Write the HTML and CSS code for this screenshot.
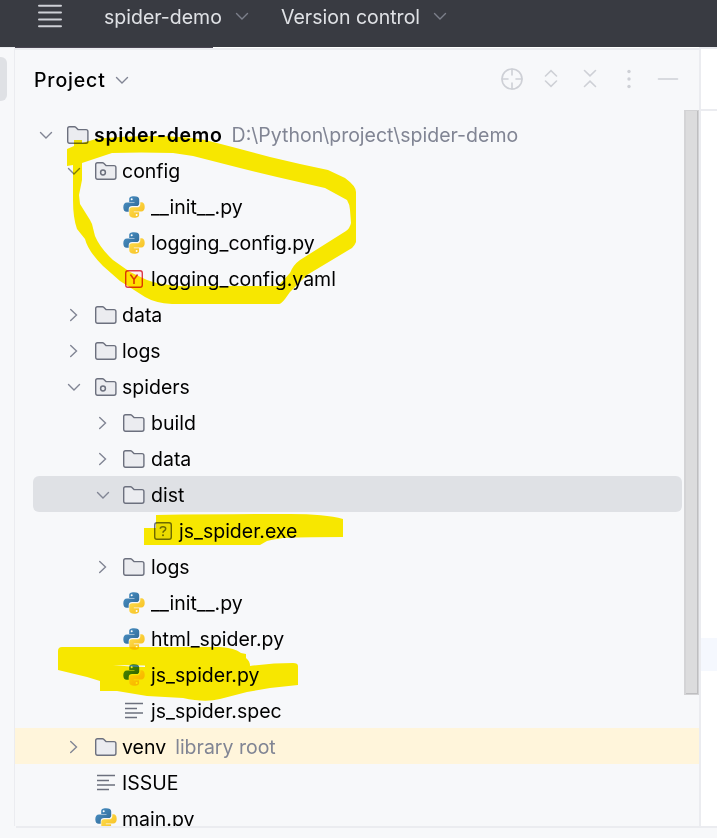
FILE: index.html
```html
<!DOCTYPE html>
<html lang="en">
<head>
    <meta charset="UTF-8">
    <title>spider-demo</title>
    <link rel="stylesheet" href="styles.css">
</head>
<body>
    <svg class="defs" width="0" height="0">
        <defs>
            <linearGradient id="blue" x1="0" y1="0" x2="1" y2="1">
                <stop offset="0" stop-color="#4f97cb"/>
                <stop offset="1" stop-color="#2b628f"/>
            </linearGradient>
            <linearGradient id="gold" x1="0" y1="0" x2="1" y2="1">
                <stop offset="0" stop-color="#ffe052"/>
                <stop offset="1" stop-color="#f5bb1c"/>
            </linearGradient>
            <symbol id="down" viewBox="0 0 24 24"><path d="M6.5 9.5L12 15L17.5 9.5" fill="none" stroke="currentColor" stroke-width="1.4" stroke-linecap="round"/></symbol>
            <symbol id="right" viewBox="0 0 24 24"><path d="M8.7 6.5L14.5 12L8.7 17.5" fill="none" stroke="currentColor" stroke-width="1.4" stroke-linecap="round"/></symbol>
            <symbol id="folder" viewBox="0 0 24 24"><path d="M1.7 5.5Q1.7 3.7 3.5 3.7H8.5Q9.2 3.7 9.7 4.2L12 6.6H20Q21.9 6.6 21.9 8.5V18.3Q21.9 20.2 20 20.2H3.6Q1.7 20.2 1.7 18.3Z" fill="#ebecf0" stroke="#6c707e" stroke-width="1.4"/></symbol>
            <symbol id="package" viewBox="0 0 24 24"><use href="#folder"/><circle cx="9" cy="13.5" r="2.4" fill="none" stroke="#6c707e" stroke-width="1.5"/></symbol>
            <symbol id="python" viewBox="0 0 24 24">
                <path d="M12 1.3C8.3 1.3 7.2 2.5 7.2 4.4V6.9H12.5V7.6H5C2.7 7.6 1.3 9.3 1.3 12.2C1.3 15.3 2.7 16.8 4.6 16.8H6.7V14.2C6.7 12.2 8.1 11 10 11H14.6C16.2 11 17.2 9.9 17.2 8.4V4.4C17.2 2.4 15.5 1.3 12 1.3Z" fill="url(#blue)"/>
                <path d="M12.2 22.7C15.9 22.7 17.1 21.5 17.1 19.7V17.2H11.8V16.4H19.2C21.5 16.4 22.7 14.8 22.7 11.9C22.7 8.8 21.4 7.3 19.5 7.3H18.3V9.2C18.3 11.2 17 12.3 15 12.3H10.2C8.4 12.3 7.3 13.3 7.3 15.1V19.6C7.3 21.6 8.9 22.7 12.2 22.7Z" fill="url(#gold)"/>
                <circle cx="9.7" cy="4.2" r="1" fill="#fff"/><circle cx="14.6" cy="19.9" r="1" fill="#fff"/>
            </symbol>
            <symbol id="yaml" viewBox="0 0 24 24"><rect x="3.7" y="3.7" width="16.6" height="16.6" rx="2.2" fill="#fff0ef" stroke="#db3b4b" stroke-width="1.4"/><path d="M8.4 7.5L12 12.5L15.6 7.5M12 12.5V17" fill="none" stroke="#db3b4b" stroke-width="1.6"/></symbol>
            <symbol id="unknown" viewBox="0 0 24 24"><rect x="3.7" y="3.7" width="16.6" height="16.6" rx="2.2" fill="#ebecf0" stroke="#6c707e" stroke-width="1.4"/><path d="M9.3 9.8Q9.3 7.7 12 7.7Q14.7 7.7 14.7 9.8Q14.7 11 13.2 11.8Q12 12.5 12 13.8" fill="none" stroke="#6c707e" stroke-width="1.5"/><circle cx="12" cy="16.3" r="1" fill="#6c707e"/></symbol>
            <symbol id="text" viewBox="0 0 24 24"><path d="M3 4.500H21M3 9.500H15M3 14H21M3 18.500H15" fill="none" stroke="#6c707e" stroke-width="1.400"/></symbol>
        </defs>
    </svg>
    <div class="topbar">
        <svg class="burger" width="26" height="26"><path d="M2 2.700H24M2 9.500H24M2 16.500H24M2 23.300H24" stroke="#ced0d6" stroke-width="2" stroke-linecap="round"/></svg>
        <span class="project-name">spider-demo</span>
        <svg class="icon"><use href="#down"/></svg>
        <span class="vcs">Version control</span>
        <svg class="icon"><use href="#down"/></svg>
    </div>
    <div class="main">
        <div class="strip"><div class="strip-tab"></div></div>
        <div class="panel">
            <div class="panel-head">
                <span class="panel-title">Project</span>
                <svg class="icon"><use href="#down"/></svg>
                <div class="tools">
                    <svg width="24" height="24" viewBox="0 0 24 24"><circle cx="12" cy="12" r="10"/><path d="M12 2V8M12 16V22M2 12H8M16 12H22"/></svg>
                    <svg width="24" height="24" viewBox="0 0 24 24"><path d="M6.5 9L12 3.7L17.5 9M6.5 14L12 19.3L17.5 14"/></svg>
                    <svg width="24" height="24" viewBox="0 0 24 24"><path d="M6.5 3.5L12 8.8L17.5 3.5M6.5 19.5L12 14.2L17.5 19.5"/></svg>
                    <svg class="dots" width="24" height="24" viewBox="0 0 24 24"><circle cx="12" cy="4.5" r="1.7"/><circle cx="12" cy="12" r="1.7"/><circle cx="12" cy="19.5" r="1.7"/></svg>
                    <svg width="24" height="24" viewBox="0 0 24 24"><path d="M2.5 12H21.5"/></svg>
                </div>
            </div>
            <div class="tree">
                <ul>
                    <li class="l0"><svg class="icon"><use href="#down"/></svg><svg class="type"><use href="#folder"/></svg><b>spider-demo</b><span class="hint">D:\Python\project\spider-demo</span></li>
                    <li class="l1"><svg class="icon"><use href="#down"/></svg><svg class="type"><use href="#package"/></svg><span>config</span></li>
                    <li class="l2"><i class="icon"></i><svg class="type"><use href="#python"/></svg><span>__init__.py</span></li>
                    <li class="l2"><i class="icon"></i><svg class="type"><use href="#python"/></svg><span>logging_config.py</span></li>
                    <li class="l2"><i class="icon"></i><svg class="type"><use href="#yaml"/></svg><span>logging_config.yaml</span></li>
                    <li class="l1"><svg class="icon"><use href="#right"/></svg><svg class="type"><use href="#folder"/></svg><span>data</span></li>
                    <li class="l1"><svg class="icon"><use href="#right"/></svg><svg class="type"><use href="#folder"/></svg><span>logs</span></li>
                    <li class="l1"><svg class="icon"><use href="#down"/></svg><svg class="type"><use href="#package"/></svg><span>spiders</span></li>
                    <li class="l2"><svg class="icon"><use href="#right"/></svg><svg class="type"><use href="#folder"/></svg><span>build</span></li>
                    <li class="l2"><svg class="icon"><use href="#right"/></svg><svg class="type"><use href="#folder"/></svg><span>data</span></li>
                    <li class="l2 selected"><svg class="icon"><use href="#down"/></svg><svg class="type"><use href="#folder"/></svg><span>dist</span></li>
                    <li class="l3"><i class="icon"></i><svg class="type"><use href="#unknown"/></svg><span>js_spider.exe</span></li>
                    <li class="l2"><svg class="icon"><use href="#right"/></svg><svg class="type"><use href="#folder"/></svg><span>logs</span></li>
                    <li class="l2"><i class="icon"></i><svg class="type"><use href="#python"/></svg><span>__init__.py</span></li>
                    <li class="l2"><i class="icon"></i><svg class="type"><use href="#python"/></svg><span>html_spider.py</span></li>
                    <li class="l2"><i class="icon"></i><svg class="type"><use href="#python"/></svg><span>js_spider.py</span></li>
                    <li class="l2"><i class="icon"></i><svg class="type"><use href="#text"/></svg><span>js_spider.spec</span></li>
                    <li class="l1 library"><svg class="icon"><use href="#right"/></svg><svg class="type"><use href="#folder"/></svg><span>venv</span><span class="hint">library root</span></li>
                    <li class="l1"><i class="icon"></i><svg class="type"><use href="#text"/></svg><span>ISSUE</span></li>
                    <li class="l1"><i class="icon"></i><svg class="type"><use href="#python"/></svg><span>main.py</span></li>
                </ul>
                <div class="scrollbar"></div>
            </div>
        </div>
        <div class="editor">
            <div class="editor-tabs"></div>
            <div class="editor-line"></div>
        </div>
    </div>
    <div class="statusbar"></div>
    <!-- highlighter marks -->
    <svg class="marker" width="717" height="838" viewBox="0 0 717 838">
        <path fill-rule="evenodd" d="M67 149L74 146V140H82V143L96 139Q120 136 160 136Q190 137 205 140L217 143L240 149L270 157L300 164L328 170L345 178Q356 186 356 192V242Q355 245 352 248L307 275L290 292L285 299Q281 304 279 304H172Q155 303 145 297L120 281L103 266Q88 251 85 239L77 229Q73 218 73 200V165L67 166Z
            M82 163L112 153Q140 152 173 153L193 156L240 168L277 177L325 188L347 200Q350 205 350 210L351 223Q350 228 346 231L300 260Q293 265 290 273L278 286H200Q170 287 153 282L147 280L130 272L113 260Q100 248 95 236L92 224L90 220L80 204L79 195L82 180Z"/>
        <path d="M156 515Q230 514 290 514Q325 514 343 519V537Q310 537 283 538Q270 540 267 541L260 545H144V528H156Z"/>
        <path fill-rule="evenodd" d="M58 651Q58 647 62 647H220Q235 648 241 653L246 654V658Q250 661 250 666Q273 663 293 663Q298 663 298 666V685L270 688L247 692L220 699Q205 703 183 698L147 696L117 691H100V681L87 677L58 670Z M113 665L145 665.5V667L130 666.5Z"/>
    </svg>
</body>
</html>
```
FILE: styles.css
```css
*{
    box-sizing: border-box;
    padding: 0;
    margin: 0;
}
body{
    width: 717px;
    height: 838px;
    display: flex;
    flex-direction: column;
    overflow: hidden;
    position: relative;
    background: #f7f8fa;
    font-family: Inter, "Liberation Sans", sans-serif;
    font-size: 19.5px;
    color: #000;
}
svg{
    display: block;
    flex: none;
}
.defs{
    position: absolute;
}
.icon{
    width: 24px;
    height: 24px;
    flex: none;
    color: #818594;
}
.topbar{
    height: 47px;
    flex: none;
    display: flex;
    align-items: flex-start;
    padding-left: 37px;
    background: #393b42;
    color: #dfe1e5;
    line-height: 34px;
}
.topbar .burger{
    margin: 3px 41px 0 0;
}
.topbar .icon{
    margin-top: 4px;
    color: #7c7f8a;
}
.project-name{
    width: 126px;
}
.vcs{
    width: 147px;
    margin-left: 27px;
}
.main{
    flex: 1;
    min-height: 0;
    display: flex;
}
.strip{
    width: 15px;
    border-top: 1px solid #ebecf0;
    border-right: 1px solid #ebecf0;
    padding-top: 9px;
}
.strip-tab{
    width: 7px;
    height: 44px;
    background: #dfe1e5;
    border-radius: 0 6px 6px 0;
}
.panel{
    width: 684px;
    display: flex;
    flex-direction: column;
    background: linear-gradient(to right, #4b4754 198px, #fff 198px) 0 0 / 100% 1px no-repeat;
}
.panel-head{
    height: 62px;
    flex: none;
    margin-top: 1px;
    border-top: 2px solid #ebecf0;
    display: flex;
    align-items: center;
    padding: 0 19px;
}
.panel-title{
    width: 76px;
    font-weight: 500;
    letter-spacing: 0.85px;
}
.tools{
    margin: 0 0 2px auto;
    display: flex;
    gap: 15px;
    fill: none;
    stroke: #ced0d6;
    stroke-width: 1.6;
    stroke-linecap: round;
}
.dots{
    fill: #ced0d6;
    stroke: none;
}
.tree{
    flex: 1;
    min-height: 0;
    position: relative;
    overflow: hidden;
}
.tree ul{
    list-style: none;
    padding-top: 6px;
}
.tree li{
    height: 36px;
    padding-top: 2px;
    display: flex;
    align-items: center;
    white-space: nowrap;
}
.type{
    width: 24px;
    height: 24px;
    margin: 0 4px 0 8px;
}
.l2 .type{
    margin: 0 5px 0 7px;
}
.tree b{
    font-weight: 600;
    letter-spacing: 0.7px;
}
.hint{
    color: #818594;
    margin-left: 9px;
}
.l0{padding-left: 19px;}
.l1{padding-left: 47px;}
.l2{padding-left: 76px;}
.l3{padding-left: 104px;}
.tree .selected{
    margin: 0 17px 0 18px;
    padding-left: 58px;
    background: #dfe1e5;
    border-radius: 6px;
}
.library{
    background: #fff5db;
}
.scrollbar{
    position: absolute;
    top: 0;
    right: 0;
    width: 15px;
    height: 585px;
    background: #dcdcdd;
    border: 1px solid #d2d2d4;
    border-left: 2px solid #d4d4d6;
    box-shadow: inset -1px -1px #bebec0;
}
.editor{
    flex: 1;
    background: #fff;
    border-left: 2px solid #ebecf0;
    border-top: 2px solid #ebecf0;
}
.editor-tabs{
    height: 62px;
    border-bottom: 2px solid #ebecf0;
}
.editor-line{
    height: 33px;
    margin-top: 527px;
    background: #f5f8fe;
}
.statusbar{
    height: 12px;
    flex: none;
    margin-left: 16px;
    border-top: 2px solid #ebecf0;
}
.marker{
    position: absolute;
    top: 0;
    left: 0;
    fill: #ffee00;
    mix-blend-mode: multiply;
}
```
